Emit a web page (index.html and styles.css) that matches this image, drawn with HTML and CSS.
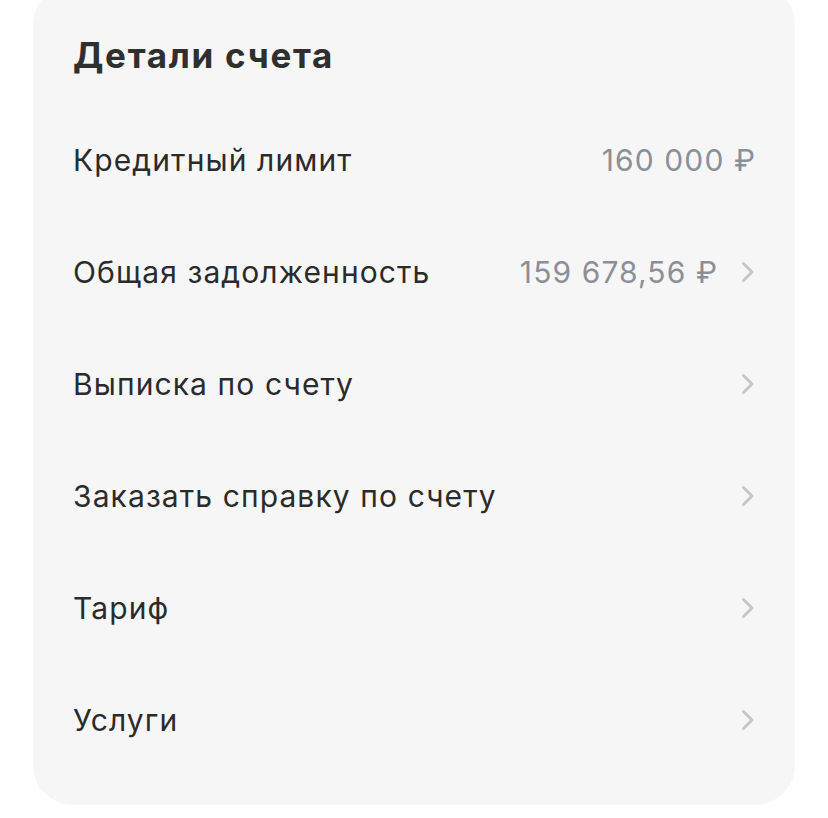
FILE: index.html
```html
<!DOCTYPE html>
<html lang="ru">
<head>
<meta charset="utf-8">
<link rel="stylesheet" href="styles.css">
</head>
<body>
<div class="card">
  <h1 class="title">Детали счета</h1>
  <ul class="list">
    <li class="row"><span class="label">Кредитный лимит</span><span class="value">160 000 ₽</span></li>
    <li class="row"><span class="label">Общая задолженность</span><span class="value">159 678,56 ₽</span><svg class="chev" viewBox="0 0 14 22"><path d="M2.5 2.5 L11 11 L2.5 19.5"/></svg></li>
    <li class="row"><span class="label">Выписка по счету</span><svg class="chev" viewBox="0 0 14 22"><path d="M2.5 2.5 L11 11 L2.5 19.5"/></svg></li>
    <li class="row"><span class="label">Заказать справку по счету</span><svg class="chev" viewBox="0 0 14 22"><path d="M2.5 2.5 L11 11 L2.5 19.5"/></svg></li>
    <li class="row"><span class="label">Тариф</span><svg class="chev" viewBox="0 0 14 22"><path d="M2.5 2.5 L11 11 L2.5 19.5"/></svg></li>
    <li class="row"><span class="label">Услуги</span><svg class="chev" viewBox="0 0 14 22"><path d="M2.5 2.5 L11 11 L2.5 19.5"/></svg></li>
  </ul>
</div>
</body>
</html>
```
FILE: styles.css
```css
html, body {
  margin: 0;
  padding: 0;
  background: #ffffff;
  height: 100%;
  overflow: hidden;
}
body {
  font-family: Inter, "Noto Sans", sans-serif;
  color: #2e2e2e;
}
.card {
  margin: -15px 0 0 33px;
  width: 762px;
  box-sizing: border-box;
  padding: 50px 40px 29px 40px;
  background: #f6f6f6;
  border-radius: 40px;
}
.title {
  margin: 0;
  font-size: 35px;
  line-height: 40px;
  font-weight: 700;
  color: #2f2f2f;
  letter-spacing: 1.7px;
}
.list {
  list-style: none;
  margin: 29px 0 0 0;
  padding: 0;
}
.row {
  height: 112px;
  display: flex;
  align-items: center;
  font-size: 30px;
  letter-spacing: 1.1px;
}
.label {
  flex: 1;
  color: #2b2b2b;
}
.value {
  color: #8b8f97;
  margin-right: -1.1px;
}
.chev {
  width: 14px;
  height: 22px;
  margin-left: 24px;
  flex: none;
  fill: none;
  stroke: #c6c6ca;
  stroke-width: 3;
  stroke-linecap: round;
  stroke-linejoin: round;
}
```
